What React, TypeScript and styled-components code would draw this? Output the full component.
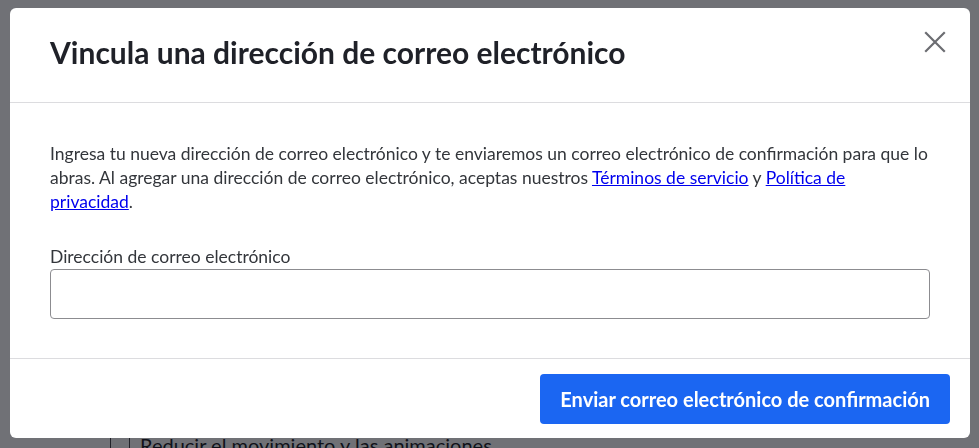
import styled, { createGlobalStyle } from "styled-components";

const GlobalStyle = createGlobalStyle`
  html, body {
    margin: 0;
    padding: 0;
    background: #ffffff;
    font-family: Lato, "Noto Sans", sans-serif;
  }
`;

const Page = styled.div`
  width: 979px;
  height: 448px;
  overflow: hidden;
  padding: 430px 0 0 110px;
  box-sizing: border-box;
`;

const SettingRow = styled.div`
  display: flex;
  align-items: stretch;
  height: 40px;
`;

const Rule = styled.div`
  width: 18px;
  border-left: 1px solid #3a3b40;
`;

const SettingText = styled.div`
  border-left: 1px solid #3a3b40;
  padding: 3px 0 0 10px;
  font-size: 20px;
  color: #111318;
`;

const Backdrop = styled.div`
  position: fixed;
  inset: 0;
  background: rgba(16, 18, 27, 0.6);
  padding: 8px 9px 0 10px;
  box-sizing: border-box;
`;

const Modal = styled.div`
  width: 960px;
  background: #ffffff;
  border-radius: 6px;
  overflow: hidden;
`;

const Header = styled.header`
  display: flex;
  justify-content: space-between;
  align-items: flex-start;
  height: 95px;
  box-sizing: border-box;
  padding: 0 22px 0 40px;
  border-bottom: 1px solid #dcdcdf;
`;

const Title = styled.h1`
  margin: 26px 0 0;
  font-size: 30px;
  line-height: 36px;
  font-weight: 700;
  color: #1f2128;
`;

const CloseButton = styled.button`
  border: none;
  background: none;
  padding: 0;
  margin-top: 21px;
  width: 26px;
  height: 26px;
  cursor: pointer;
  color: #6c6d72;
  display: flex;
  align-items: center;
  justify-content: center;
`;

const Body = styled.div`
  padding: 39px 40px 39px;
  border-bottom: 1px solid #dcdcdf;
`;

const Intro = styled.p`
  margin: 0 0 31px;
  font-size: 17.5px;
  line-height: 24px;
  color: #33363b;
`;

const Link = styled.a`
  color: #0000ee;
  text-decoration: underline;
`;

const Label = styled.label`
  display: block;
  font-size: 17.5px;
  line-height: 24px;
  color: #33363b;
`;

const Input = styled.input`
  display: block;
  width: 100%;
  height: 50px;
  box-sizing: border-box;
  border: 1px solid #8c8c90;
  border-radius: 4px;
  padding: 0 12px;
  font: inherit;
  font-size: 17.5px;
  outline: none;
`;

const Footer = styled.footer`
  display: flex;
  justify-content: flex-end;
  padding: 15px 20px 14px;
`;

const PrimaryButton = styled.button`
  height: 50px;
  padding: 0 20px;
  border: none;
  border-radius: 4px;
  background: #1b66f2;
  color: #ffffff;
  font-family: Lato, "Noto Sans", sans-serif;
  font-size: 20px;
  font-weight: 700;
  cursor: pointer;
`;

export default function App() {
  return (
    <>
      <GlobalStyle />
      <Page>
        <SettingRow>
          <Rule />
          <SettingText>Reducir el movimiento y las animaciones</SettingText>
        </SettingRow>
      </Page>
      <Backdrop>
        <Modal role="dialog" aria-labelledby="link-email-title">
          <Header>
            <Title id="link-email-title">Vincula una dirección de correo electrónico</Title>
            <CloseButton aria-label="Cerrar">
              <svg width="22" height="22" viewBox="0 0 22 22" fill="none">
                <path d="M2 2L20 20M20 2L2 20" stroke="currentColor" strokeWidth="2.2" strokeLinecap="square" />
              </svg>
            </CloseButton>
          </Header>
          <Body>
            <Intro>
              Ingresa tu nueva dirección de correo electrónico y te enviaremos un correo electrónico de
              confirmación para que lo abras. Al agregar una dirección de correo electrónico, aceptas
              nuestros <Link href="#">Términos de servicio</Link> y{" "}
              <Link href="#">Política de privacidad</Link>.
            </Intro>
            <Label htmlFor="email">Dirección de correo electrónico</Label>
            <Input id="email" type="email" />
          </Body>
          <Footer>
            <PrimaryButton>Enviar correo electrónico de confirmación</PrimaryButton>
          </Footer>
        </Modal>
      </Backdrop>
    </>
  );
}
